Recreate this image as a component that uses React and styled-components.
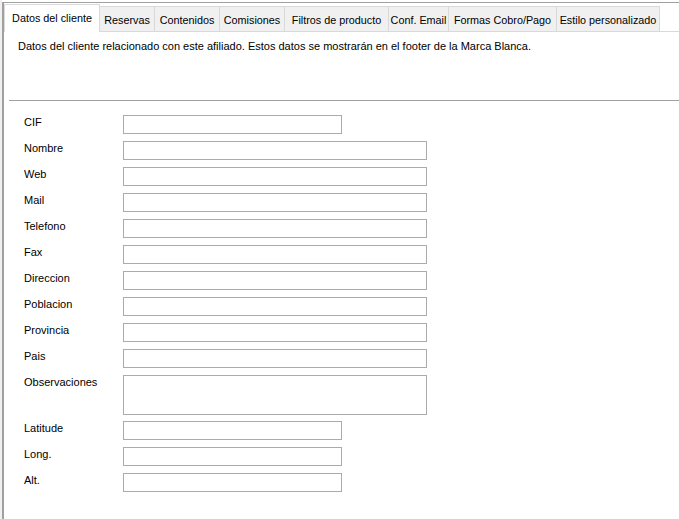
import React from "react";
import styled, { createGlobalStyle } from "styled-components";

const GlobalStyle = createGlobalStyle`
  body {
    margin: 0;
    background: #ffffff;
    font-family: "Liberation Sans", Arial, sans-serif;
    font-size: 11px;
    color: #000000;
  }
`;

const tabs = [
  { label: "Datos del cliente", width: 96 },
  { label: "Reservas", width: 56 },
  { label: "Contenidos", width: 66 },
  { label: "Comisiones", width: 66 },
  { label: "Filtros de producto", width: 105 },
  { label: "Conf. Email", width: 61 },
  { label: "Formas Cobro/Pago", width: 109 },
  { label: "Estilo personalizado", width: 104 },
];

const fields = [
  { label: "CIF", size: "short" },
  { label: "Nombre", size: "long" },
  { label: "Web", size: "long" },
  { label: "Mail", size: "long" },
  { label: "Telefono", size: "long" },
  { label: "Fax", size: "long" },
  { label: "Direccion", size: "long" },
  { label: "Poblacion", size: "long" },
  { label: "Provincia", size: "long" },
  { label: "Pais", size: "long" },
  { label: "Observaciones", size: "multi" },
  { label: "Latitude", size: "short" },
  { label: "Long.", size: "short" },
  { label: "Alt.", size: "short" },
];

const Window = styled.div`
  height: 519px;
  box-sizing: border-box;
  border-left: 2px solid #f0f0f0;
  overflow: hidden;
`;

const Frame = styled.div`
  margin-top: 2px;
  height: 517px;
  box-sizing: border-box;
  border-top: 1px solid #a0a0a0;
  border-left: 2px solid #a0a0a0;
  background: #ffffff;
`;

const TabStrip = styled.div`
  display: flex;
  align-items: flex-start;
  height: 28px;
  border-bottom: 1px solid #d9d9d9;
`;

const Tab = styled.div`
  position: relative;
  box-sizing: border-box;
  width: ${(p) => p.$w}px;
  height: ${(p) => (p.$active ? 28 : 25)}px;
  margin-top: ${(p) => (p.$active ? 1 : 3)}px;
  margin-left: -1px;
  padding-top: 7px;
  border: 1px solid #d9d9d9;
  border-bottom: none;
  background: ${(p) => (p.$active ? "#ffffff" : "#f0f0f0")};
  z-index: ${(p) => (p.$active ? 1 : 0)};
  font-size: 10.8px;
  line-height: 13px;
  text-align: center;
  white-space: nowrap;

  &:first-child {
    margin-left: 0;
  }
`;

const Description = styled.p`
  margin: 8px 0 0 14px;
  line-height: 13px;
  white-space: nowrap;
`;

const Separator = styled.div`
  margin: 47px 0 0 5px;
  height: 1px;
  background: #a0a0a0;
`;

const Form = styled.div`
  display: grid;
  grid-template-columns: 99px auto;
  row-gap: 7px;
  justify-items: start;
  padding: 14px 0 0 20px;
`;

const Label = styled.label`
  padding-top: 1px;
  line-height: 13px;
`;

const widths = { short: 219, long: 304, multi: 304 };

const TextBox = styled.input`
  display: block;
  box-sizing: border-box;
  width: ${(p) => widths[p.$size]}px;
  height: 19px;
  margin: 0;
  padding: 0 2px;
  border: 1px solid #ababab;
  background: #ffffff;
  outline: none;
  font: inherit;
`;

const TextArea = styled.textarea`
  display: block;
  box-sizing: border-box;
  width: ${(p) => widths[p.$size]}px;
  height: 40px;
  margin: 0 0 -1px 0;
  padding: 0 2px;
  border: 1px solid #ababab;
  background: #ffffff;
  resize: none;
  outline: none;
  font: inherit;
`;

export default function App() {
  return (
    <>
      <GlobalStyle />
      <Window>
        <Frame>
          <TabStrip>
            {tabs.map((tab, i) => (
              <Tab key={tab.label} $w={tab.width} $active={i === 0}>
                {tab.label}
              </Tab>
            ))}
          </TabStrip>
          <Description>
            Datos del cliente relacionado con este afiliado. Estos datos se
            mostrarán en el footer de la Marca Blanca.
          </Description>
          <Separator />
          <Form>
            {fields.map((field) => (
              <React.Fragment key={field.label}>
                <Label>{field.label}</Label>
                {field.size === "multi" ? (
                  <TextArea $size={field.size} />
                ) : (
                  <TextBox $size={field.size} />
                )}
              </React.Fragment>
            ))}
          </Form>
        </Frame>
      </Window>
    </>
  );
}
